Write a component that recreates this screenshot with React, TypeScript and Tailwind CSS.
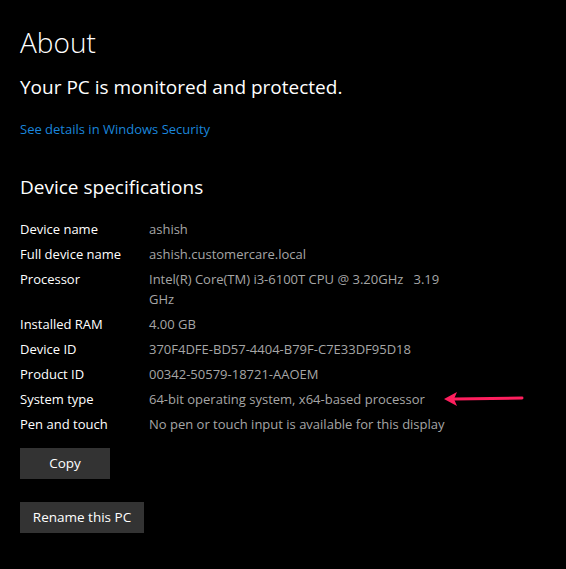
import React from "react";

const specs: { label: string; value: string }[] = [
  { label: "Device name", value: "ashish" },
  { label: "Full device name", value: "ashish.customercare.local" },
  { label: "Processor", value: "Intel(R) Core(TM) i3-6100T CPU @ 3.20GHz   3.19 GHz" },
  { label: "Installed RAM", value: "4.00 GB" },
  { label: "Device ID", value: "370F4DFE-BD57-4404-B79F-C7E33DF95D18" },
  { label: "Product ID", value: "00342-50579-18721-AAOEM" },
  { label: "System type", value: "64-bit operating system, x64-based processor" },
  { label: "Pen and touch", value: "No pen or touch input is available for this display" },
];

function Arrow() {
  return (
    <svg width="84" height="18" viewBox="0 0 84 18" className="absolute left-[422px] top-[1px]">
      <line x1="12" y1="9" x2="80" y2="8" stroke="#ff1f5e" strokeWidth="3" strokeLinecap="round" />
      <polygon points="2,9 15,2 12,9 15,16" fill="#ff1f5e" />
    </svg>
  );
}

export default function App() {
  return (
    <div
      className="w-[566px] h-[569px] bg-black text-white overflow-hidden px-5"
      style={{ fontFamily: '"Open Sans", "Noto Sans", sans-serif' }}
    >
      <h1 className="text-[28px] font-light leading-[36px] pt-[24px]">About</h1>
      <p className="text-[19px] leading-[26px] mt-[14px]">Your PC is monitored and protected.</p>
      <a className="block text-[13px] leading-[20px] mt-[19px] text-[#1a86dc]">See details in Windows Security</a>

      <h2 className="text-[19px] leading-[26px] mt-[35px]">Device specifications</h2>

      <div className="mt-[19px] flex flex-col gap-[5px] text-[13px] leading-[20px]">
        {specs.map((s) => (
          <div key={s.label} className="relative flex">
            <div className="w-[129px] shrink-0">{s.label}</div>
            <div className="w-[305px] text-[#a6a6a6] whitespace-pre-wrap">{s.value}</div>
            {s.label === "System type" && <Arrow />}
          </div>
        ))}
      </div>

      <button className="mt-[14px] block w-[90px] h-[31px] bg-[#333333] text-[13.5px] text-white">Copy</button>
      <button className="mt-[23px] block w-[124px] h-[31px] bg-[#333333] text-[13.5px] text-white">Rename this PC</button>
    </div>
  );
}
